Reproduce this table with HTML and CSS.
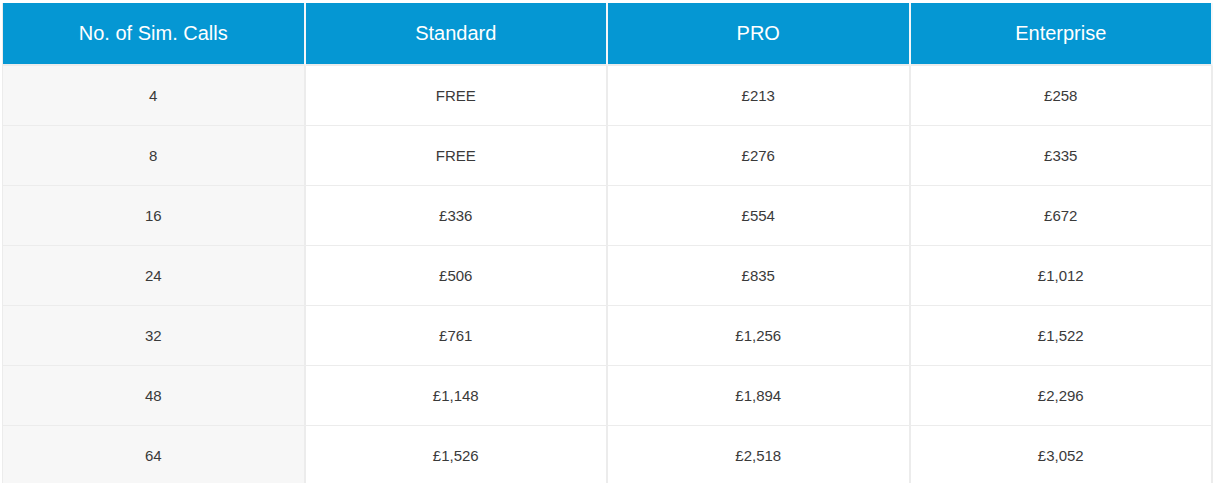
FILE: index.html
```html
<!DOCTYPE html>
<html lang="en">
<head>
<meta charset="utf-8">
<title>Pricing</title>
<link rel="stylesheet" href="styles.css">
</head>
<body>
<div class="wrap">
<table class="price-table">
  <thead>
    <tr>
      <th>No. of Sim. Calls</th>
      <th>Standard</th>
      <th>PRO</th>
      <th>Enterprise</th>
    </tr>
  </thead>
  <tbody>
    <tr><td>4</td><td>FREE</td><td>£213</td><td>£258</td></tr>
    <tr><td>8</td><td>FREE</td><td>£276</td><td>£335</td></tr>
    <tr><td>16</td><td>£336</td><td>£554</td><td>£672</td></tr>
    <tr><td>24</td><td>£506</td><td>£835</td><td>£1,012</td></tr>
    <tr><td>32</td><td>£761</td><td>£1,256</td><td>£1,522</td></tr>
    <tr><td>48</td><td>£1,148</td><td>£1,894</td><td>£2,296</td></tr>
    <tr><td>64</td><td>£1,526</td><td>£2,518</td><td>£3,052</td></tr>
  </tbody>
</table>
</div>
</body>
</html>
```
FILE: styles.css
```css
html, body {
  margin: 0;
  padding: 0;
  background: #fff;
}
.wrap {
  padding: 3px 0 0 2px;
}
.price-table {
  width: 1211px;
  table-layout: fixed;
  border-collapse: separate;
  border-spacing: 0;
  border-left: 1px solid #ececec;
  font-family: "Liberation Sans", Arial, sans-serif;
}
.price-table th {
  height: 61px;
  padding: 0;
  background: #0597d3;
  color: #fff;
  font-size: 20px;
  font-weight: normal;
  text-align: center;
  vertical-align: middle;
  border-right: 2px solid #f4f7f9;
  border-bottom: 2px solid #ececec;
}
.price-table td {
  height: 59px;
  padding: 0;
  color: #3a3a3a;
  font-size: 15px;
  text-align: center;
  vertical-align: middle;
  border-right: 2px solid #ececec;
  border-bottom: 1px solid #ececec;
  background: #fff;
}
.price-table td:first-child {
  background: #f7f7f7;
}
```
